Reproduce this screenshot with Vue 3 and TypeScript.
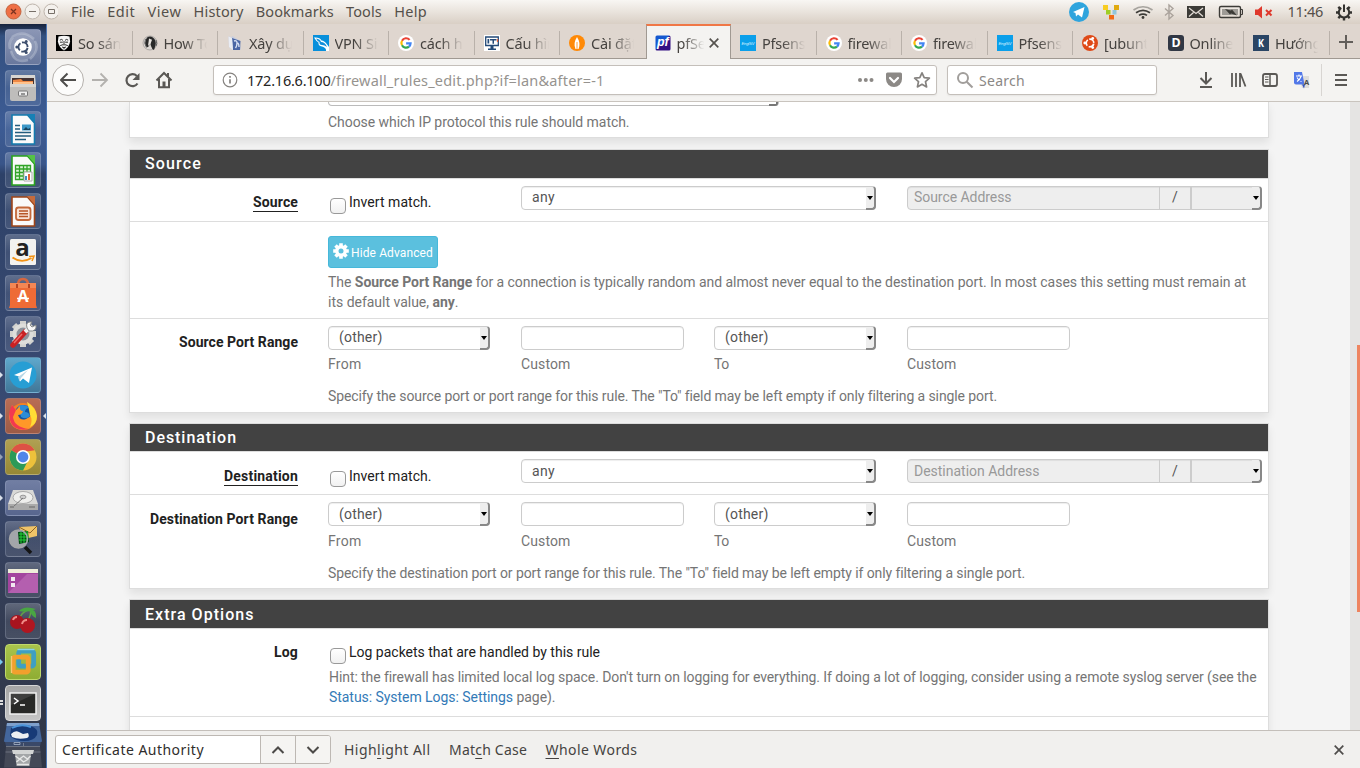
<script setup lang="ts">
interface Tab { title: string; icon: string; active?: boolean }
interface LauncherItem { icon: string; tone: string; mark?: string }
interface PortField { kind: 'select' | 'input'; caption: string; width: number }

// Spreads a label's letters so that it occupies the given width.
const vFit = {
  mounted(el: HTMLElement, binding: { value: number }) {
    const natural = el.getBoundingClientRect().width
    const count = (el.textContent ?? '').length
    if (count > 0) el.style.letterSpacing = `${(binding.value - natural) / count}px`
  },
}

const menus: [string, number][] = [
  ['File', 24], ['Edit', 28], ['View', 34], ['History', 50], ['Bookmarks', 78], ['Tools', 36], ['Help', 33],
]

const google = '<circle cx="8" cy="8" r="8" fill="#fff"/><g fill="none" stroke-width="2.2"><path d="M11.6 4.9A4.6 4.6 0 0 0 4 5.7" stroke="#ea4335"/><path d="M4 5.7a4.6 4.6 0 0 0 0 4.6" stroke="#fbbc05"/><path d="M4 10.3a4.6 4.6 0 0 0 7 1.3" stroke="#34a853"/><path d="M11 11.6a4.6 4.6 0 0 0 1.6-3.3H8.1" stroke="#4285f4"/></g>'
const engBlue = '<path fill="#0a9fea" d="M0 0h16v16H0z"/><text x="8" y="9.6" font-size="4.2" font-style="italic" font-family="Liberation Sans" text-anchor="middle" fill="#d8f0ff" textLength="13">EngISV</text>'

const favicons: Record<string, string> = {
  anon: '<path d="M0 0h16v16H0z"/><path d="M2.500 1.500q5.500-1.500 11 0l.6 5q-.8 5.500-6.100 9Q2.700 12 1.900 6.500z" fill="#f5f5f5"/><path d="M3.800 5.200q1.700-1.700 3.200.2M9 5.400q1.500-1.900 3.200-.2M4 7.200h2.800M9.200 7.200H12M8 6v3.200M4.200 10.600l3-1 .8.7.8-.7 3 1M6 12q2 1.200 4 0M8 12.500v2" stroke="#000" stroke-width=".8" fill="none"/>',
  rhino: '<circle cx="8" cy="8" r="7" fill="#ddd8d4" stroke="#8b8887" stroke-width=".6"/><path d="M5 2.500Q9 0 12 3.500q2.500 3 1.500 7L12 15q-2-.5-3-4L8 7.500 7 11q-1 1.500-2.500 1Q1.500 8 5 2.500z" fill="#292929"/><path d="M7 3.500l3 1.300-1.500 4L6 11z" fill="#e8e4e0"/><path d="M3.500 4q-2 4 1 8.500M14 5q1.500 4 0 6" stroke="#666" fill="none"/>',
  book: '<path d="M1.500 1.500l3 .5 1-1 7 4.500 1.300 9-8.300.5L2 12z" fill="#c9cede"/><path d="M5 3l8.500 3-.5 9H6z" fill="#4a66a4"/><path d="M1.500 1.500L5 3l1 12-4-3z" fill="#e9ecf3"/><path d="M7 6q3-1 3 2 0 3-1.500 5M10 8q2 0 2 4" stroke="#d6dff2" stroke-width="1.400" fill="none"/>',
  vpn: '<path d="M0 0h16v16H0z" fill="#078fdb"/><path d="M1 2.500q6-.5 7.500 3 3 .2 6 4.500L16 12v4h-3q.5-3.500-4-4.500Q5 11 5.500 7.500 3 6 1 2.500z" fill="#fff"/><path d="M3 3.500q4.500.5 5 3.500 4 0 6 5-2.500-2-5-2-3 0-2.500-3Q4.500 6.500 3 3.500z" fill="#118ed9"/>',
  google,
  monitor: '<path d="M0 0h16v16H0z" fill="#fff"/><path d="M1.700 2h12.600v8.500H1.700z" fill="#fff" stroke="#244a78" stroke-width="1.300"/><path d="M6.500 11h3v2.500H12V15H4v-1.500h2.500zM3.500 4h1.700v4.500H3.500zM6 4h6.500v1.500H10v3.200H8.500V5.500H6z" fill="#244a78"/><path d="M13.500 4v3" stroke="#ee6842" stroke-width="1.200"/>',
  leaf: '<circle cx="8" cy="8" r="8" fill="#ff8906"/><path d="M8 2q4 6 1.500 12h-3Q4 8 8 2z" fill="#fff"/><path d="M8 7v7" stroke="#ff8906" stroke-width=".8"/>',
  pf: '<defs><linearGradient id="pfg" x2="1" y2="1"><stop offset=".45" stop-color="#1558cf"/><stop offset=".5" stop-color="#331083"/></linearGradient></defs><rect x=".5" y=".5" width="15" height="15" rx="1.500" fill="url(#pfg)"/><text x="7.800" y="11.400" font-size="12.500" font-weight="bold" font-style="italic" font-family="Liberation Sans" text-anchor="middle" fill="#fff">pf</text>',
  eng: engBlue,
  ubuntu: '<circle cx="8" cy="8" r="8" fill="#df4a18"/><circle cx="8" cy="8" r="3.800" fill="none" stroke="#fff" stroke-width="1.700" stroke-dasharray="6.500 1.460" stroke-dashoffset="-.7"/><g fill="#fff"><circle cx="2.800" cy="8" r="1.400"/><circle cx="10.700" cy="3.400" r="1.400"/><circle cx="10.700" cy="12.600" r="1.400"/></g>',
  dlet: '<rect width="16" height="16" rx="3" fill="#313744"/><text x="8" y="12.300" font-size="12.500" font-weight="bold" font-family="Noto Sans" text-anchor="middle" fill="#fff">D</text>',
  klet: '<path d="M0 0h16v16H0z" fill="#2a4565"/><text x="8" y="11.800" font-size="10.500" font-weight="bold" font-family="Noto Sans" text-anchor="middle" fill="#fff" textLength="6" lengthAdjust="spacingAndGlyphs">K</text>',
}

const tabs: Tab[] = [
  { title: 'So sánh', icon: 'anon' }, { title: 'How To', icon: 'rhino' }, { title: 'Xây dựng', icon: 'book' },
  { title: 'VPN Site', icon: 'vpn' }, { title: 'cách hoạt', icon: 'google' }, { title: 'Cấu hình', icon: 'monitor' },
  { title: 'Cài đặt', icon: 'leaf' }, { title: 'pfSense', icon: 'pf', active: true }, { title: 'Pfsense', icon: 'eng' },
  { title: 'firewall', icon: 'google' }, { title: 'firewall', icon: 'google' }, { title: 'Pfsense', icon: 'eng' },
  { title: '[ubuntu]', icon: 'ubuntu' }, { title: 'Online', icon: 'dlet' }, { title: 'Hướng', icon: 'klet' },
]

const doc = (edge: string, fold: string, body: string) =>
  `<path d="M7 4h15.500l7 8v21H7z" fill="#fafafa" stroke="${edge}" stroke-width="1.600"/><path d="M22 3h8v9z" fill="${fold}"/>${body}`

const apps: Record<string, string> = {
  dash: '<circle cx="18" cy="18" r="13" fill="#fff" opacity=".13"/><path d="M7 8Q18 0 29 10M30 12q5 9-5 18M23 31Q9 35 6 22M5 20Q3 13 8 8" stroke="#d5dbe6" stroke-width="2.500" opacity=".35" fill="none"/><circle cx="18" cy="18" r="8.800" fill="#fff"/><circle cx="18" cy="18" r="4.600" fill="none" stroke="#3d4e6d" stroke-width="1.900" stroke-dasharray="8 1.630" stroke-dashoffset="-.8"/><g fill="#3d4e6d"><circle cx="11.800" cy="18" r="1.500"/><circle cx="21.200" cy="12.600" r="1.500"/><circle cx="21.200" cy="23.400" r="1.500"/></g>',
  files: '<path d="M6 5h24l1 11H5z" fill="#d8d6d2"/><path d="M7 8h22v7H7z" fill="#433"/><path d="M8 10l8-1 2 2h10v5H8z" fill="#ee8845"/><path d="M8 12h20v2H8z" fill="#ffc28c"/><path d="M5 14h26v15q0 2-2 2H7q-2 0-2-2z" fill="#bebdbb"/><path d="M5 14h26v3H5z" fill="#d5d4d2"/><rect x="13.500" y="21" width="9" height="5" rx="1" fill="#eee" stroke="#777"/><path d="M16 24h4" stroke="#777" stroke-width="1.500"/>',
  writer: doc('#147bad', '#1780b5', '<path d="M10 14.500h5M10 18h5M10 21.500h16M10 25h16M10 28.500h11" stroke="#235d7e" stroke-width="1.600"/><path d="M17 13.500h9v6h-9z" fill="#3d98c8"/><path d="M18 19l3-3 2 2 2-1v2z" fill="#17435e"/>'),
  calc: doc('#29a21f', '#55c345', '<path d="M10.500 13.500h15v14h-15zM10.500 17h15M10.500 20.500h15M10.500 24h15M14.500 13.500v14M18.500 13.500v14M22 13.500v14" stroke="#31a428" stroke-width="1.300" fill="#dcf5d7"/><path d="M19 20h8v9h-8z" fill="#fff" stroke="#aaa"/><path d="M21 28v-4" stroke="#3f8fbf" stroke-width="2"/><path d="M24 28v-6" stroke="#e16536" stroke-width="2"/>'),
  impress: doc('#a04519', '#c66b3c', '<rect x="11" y="14.500" width="14.500" height="12.500" rx="2.500" fill="#f8e3d7" stroke="#c4683a" stroke-width="1.800"/><path d="M14 18h9M14 20.800h9M14 23.600h9" stroke="#b75627" stroke-width="1.500"/>'),
  amazon: '<rect x="5" y="5" width="26" height="26" rx="1.500" fill="#f3f2f0"/><text x="17.500" y="21.500" font-family="Open Sans" font-size="24" font-weight="bold" text-anchor="middle" fill="#222">a</text><path d="M7.500 23.500q9 6.500 19 .5" stroke="#f39215" stroke-width="1.900" fill="none"/><path d="M24 22.500l5-.5-2 5" stroke="#f39215" stroke-width="1.500" fill="none"/>',
  store: '<path d="M13 10q0-6 5-6t5 6" stroke="#d76740" stroke-width="2.500" fill="none"/><path d="M5 8h26v22l1 3H4l1-3z" fill="#ee6b36"/><path d="M5 8h26v5H5z" fill="#f48754"/><path d="M12 13V9M24 13V9" stroke="#b84623" stroke-width="2"/><text x="18" y="27" text-anchor="middle" font-family="Open Sans" font-weight="bold" font-size="16" fill="#fff">A</text><path d="M12 23.500h12" stroke="#fff" stroke-width="1.500"/>',
  settings: '<g stroke="#d2d2cf" stroke-width="6"><path d="M18 5v26M5 18h26M9 9l18 18M9 27L27 9"/></g><circle cx="18" cy="18" r="10.500" fill="#dededb"/><circle cx="18" cy="18" r="6.500" fill="#8d929b"/><path d="M8 29L20 16" stroke="#c82123" stroke-width="5.500" stroke-linecap="round"/><path d="M9 27l8-9" stroke="#ee6b68" stroke-width="1.500"/><path d="M20 16l5-5" stroke="#eee" stroke-width="4"/><path d="M22 12q-2-7 5-6l-2 3 2 2 4-2q1 7-7 6z" fill="#f7f7f7" stroke="#858888"/>',
  telegram: '<circle cx="18" cy="18" r="13.500" fill="#279ed4"/><path d="M9 18l18-7.500L24 26l-6-4.500-3 3-1-5z" fill="#fff"/><path d="M13 20l10-7-7 8-1.500 3.500z" fill="#b8d7e7"/>',
  firefox: '<circle cx="18" cy="18" r="13" fill="#f38122"/><circle cx="18.500" cy="16" r="9" fill="#16539f"/><path d="M13 8q7-3 12 2-5 0-5 4 4 0 5 4-4 4-9 1z" fill="#2d8cd6"/><path d="M22 4q10 5 10 15-2 13-15 13Q5 31 4 18l3-11 4 5 4-4q-1 5 3 5-1 4-5 4 2 6 8 4 8-3 5-11-2-2-4-6z" fill="#ff9828"/><path d="M22 4q9 6 10 14 0 8-7 11 3-7 0-12-1-7-3-13z" fill="#ffdc35"/><path d="M7 7q-5 9-1 18 5 9 18 6Q9 29 8 19l3-7z" fill="#f33950"/>',
  chrome: '<circle cx="18" cy="18" r="13.500" fill="#edc13b"/><path d="M18 18L6.300 11.300A13.500 13.500 0 0 1 29.700 11.300L18 13z" fill="#dd5245"/><path d="M18 18L6.300 11.300A13.500 13.500 0 0 0 18 31.500l5-10z" fill="#2c9a58"/><circle cx="18" cy="18" r="7" fill="#fff"/><circle cx="18" cy="18" r="5.400" fill="#5085e9"/>',
  disk: '<path d="M8 10h20l5 14v6H3v-6z" fill="#d8d8d6"/><path d="M3 24h30v6H3z" fill="#aaa"/><ellipse cx="18" cy="17.500" rx="10" ry="6" fill="#efefed" stroke="#aaa"/><ellipse cx="18" cy="17" rx="3" ry="1.800" fill="#ccc" stroke="#999"/><path d="M9 26l9-8" stroke="#777"/><path d="M5 27h4M24 27h6" stroke="#666"/>',
  zenmap: '<path d="M14 6l18-1v10l-13 3z" fill="#f0c468"/><path d="M14 6l11 6 7-7" fill="none" stroke="#8c6225"/><path d="M20 26l6 6" stroke="#151515" stroke-width="3.500"/><circle cx="13.500" cy="18" r="9" fill="#a3a6aa"/><path d="M13 11l10-1 1 11-10 2z" fill="#034a12"/><path d="M14 13h9M14 16h10M14 19h9M16 11v11M19 10v12M22 10v11" stroke="#28d93c" stroke-width=".9"/><circle cx="13.500" cy="18" r="9" fill="none" stroke="#a5a7a8" stroke-width="1.500"/>',
  desktop: '<path d="M3 7h30v24H3z" fill="#a3459f"/><path d="M3 7h30v4H3z" fill="#eeedda"/><path d="M3 31L22 12h11v19z" fill="#c57abf" opacity=".5"/><path d="M6 15h4v4H6zM6 21h4v4H6z" fill="#f1e7ef"/>',
  cherry: '<path d="M14 17Q16 9 25 6M22 18q5-6 3-12" stroke="#64a146" stroke-width="1.400" fill="none"/><path d="M14 8q5-6 17-2-8 4-17 2zM24 6q8 0 7 9-5-2-7-9z" fill="#49a643"/><circle cx="12" cy="19" r="7" fill="#a8141f"/><circle cx="22.500" cy="22.500" r="7.500" fill="#b01620"/><path d="M8 17q1-3 4-3M17 21q1-4 5-4" stroke="#ef8d87" stroke-width="2" fill="none"/>',
  vmware: '<rect x="13.700" y="7.200" width="15" height="15" rx="2" fill="none" stroke="#3f9fc2" stroke-width="4.800"/><path d="M12.500 5.500h17" stroke="#8ed3e6" stroke-width="1.400"/><rect x="8.200" y="13.200" width="15" height="15" rx="2" fill="none" stroke="#f2a02d" stroke-width="4.800"/><path d="M6.500 12v17" stroke="#f8c873" stroke-width="1.300"/><path d="M13.700 15.600v6.600h7" fill="none" stroke="#3f9fc2" stroke-width="2.600"/>',
  terminal: '<rect x="5" y="8" width="26" height="21" fill="#282927" stroke="#f2f2f2" stroke-width="1.500"/><path d="M6 9h24L6 20z" fill="#555" opacity=".5"/><path d="M9 13l4 3-4 3M15 20h5" fill="none" stroke="#fff" stroke-width="1.500"/>',
}

const launcher: LauncherItem[] = [
  { icon: 'dash', tone: 'light' }, { icon: 'files', tone: 'plain' }, { icon: 'writer', tone: 'plain' },
  { icon: 'calc', tone: 'plain' }, { icon: 'impress', tone: 'plain' }, { icon: 'amazon', tone: 'plain' },
  { icon: 'store', tone: 'plain' }, { icon: 'settings', tone: 'plain' }, { icon: 'telegram', tone: 'cyan', mark: 'run' },
  { icon: 'firefox', tone: 'rust', mark: 'focus' }, { icon: 'chrome', tone: 'olive', mark: 'hollow' },
  { icon: 'disk', tone: 'steel', mark: 'run' }, { icon: 'zenmap', tone: 'plain' }, { icon: 'desktop', tone: 'plain' },
  { icon: 'cherry', tone: 'plain' }, { icon: 'vmware', tone: 'lime', mark: 'sky' }, { icon: 'terminal', tone: 'grey', mark: 'dots' },
]

const portFields: PortField[] = [
  { kind: 'select', caption: 'From', width: 33.5 }, { kind: 'input', caption: 'Custom', width: 49.5 },
  { kind: 'select', caption: 'To', width: 15 }, { kind: 'input', caption: 'Custom', width: 49.5 },
]
</script>

<template>
  <div class="desktop">
    <header class="menubar">
      <svg class="winbtns" width="58" height="24" viewBox="0 0 58 24">
        <circle cx="13.500" cy="11.500" r="7.500" fill="#ef6f45" stroke="#c4643f" />
        <path d="M11 9l5 5M16 9l-5 5" stroke="#7b3320" stroke-width="1.300" />
        <g fill="#f4f1ed" stroke="#bdb4ab"><circle cx="32.500" cy="11.500" r="7.500" /><circle cx="51.500" cy="11.500" r="7.500" /></g>
        <path d="M29 11.500h7M48.500 9.500h6v4h-6z" fill="none" stroke="#777069" />
      </svg>
      <nav class="menus"><span v-for="[name, w] in menus" :key="name" v-fit="w">{{ name }}</span></nav>
      <svg class="tray" width="300" height="24" viewBox="1060 0 300 24">
        <circle cx="1079" cy="12" r="10" fill="#2fa4dd" /><path d="M1073 12l11.500-5-2.500 10.500-4-3-2 2-.5-3.500z" fill="#fff" />
        <path d="M1103 5h5v5h-5z" fill="#f8cd21" /><path d="M1114 5h5v5h-5z" fill="#e0aa0f" /><path d="M1106 10h4.500v4.500h-4.500z" fill="#a0ce25" /><path d="M1112.500 10h4v4.500h-4z" fill="#91c7dc" /><path d="M1109 15h5v4.500h-5z" fill="#f26a16" />
        <g fill="none" stroke="#3c3b37" stroke-width="1.700"><path d="M1133.500 10q9.500-6.500 19 0" opacity=".4" /><path d="M1136 12.800q7-5 14 0M1139 15.400q4-2.600 8 0" /></g><circle cx="1143" cy="17.500" r="1.400" fill="#3c3b37" />
        <path d="M1165 8.500l8 7-4 3.500V5l4 3.500-8 7" fill="none" stroke="#aaa39c" stroke-width="1.400" />
        <path d="M1187 6h18v12h-18z" fill="#3c3b37" /><path d="M1189 8l7 5.500 7-5.500M1189 16.500l4.500-4M1203 16.500l-4.500-4" fill="none" stroke="#e6e0da" stroke-width="1.200" />
        <rect x="1219.500" y="6.500" width="21" height="11" rx="1.500" fill="none" stroke="#3c3b37" stroke-width="1.400" /><path d="M1222 9h16v6h-16z" fill="#9e9b96" /><path d="M1241 9.500h1.500v5h-1.500" fill="none" stroke="#3c3b37" /><path d="M1225 9l6 1.500 1-1 5 6-6-2-1 1z" fill="#3c3b37" />
        <path d="M1255 9.500h3l4-3.500v12.500l-4-3.500h-3z" fill="#df382c" /><path d="M1266 10l5.500 5.500M1271.500 10l-5.500 5.500" stroke="#df382c" stroke-width="2" />
        <g stroke="#33322f" fill="none"><path d="M1341.300 7.900a5.200 5.200 0 1 0 5.400 0" stroke-width="2" /><path d="M1344 4.500v7.500" stroke-width="2" /><path d="M1336 12.500h3M1349 12.500h3M1338.300 18.200l2-2M1349.700 18.200l-2-2M1344 17v3.500M1338.300 6.800l2 2M1349.700 6.800l-2 2" stroke-width="2.400" /></g>
      </svg>
      <span class="clock" v-fit="35.5">11:46</span>
    </header>

    <div class="main">
      <aside class="launcher">
        <div v-for="item in launcher" :key="item.icon" class="slot">
          <i v-if="item.mark" class="mark" :class="item.mark"></i>
          <i v-if="item.mark === 'focus'" class="mark-right"></i>
          <div class="tile" :class="item.tone"><svg width="36" height="36" viewBox="0 0 36 36" v-html="apps[item.icon]" /></div>
        </div>
        <svg class="folded" width="40" height="46" viewBox="0 0 40 46">
          <path d="M4 1h32l3 18q0 1-1 1H2q-1 0-1-1z" fill="#43669c" /><path d="M4 1h32l.5 3H3.500z" fill="#7fa0cc" />
          <path d="M8 6q9-5 20-2 8 3 6 9-3 6-13 6-9 0-14-5z" fill="#173a77" /><path d="M9 6q9-5 19-1" stroke="#4c94da" stroke-width="2" fill="none" /><path d="M8 12q4-4 8-2l4 2 5-1q2 4-1 5-9 2-15-1z" fill="#eceff2" />
          <path d="M2 20h36l-1 4H3z" fill="#3a4968" /><path d="M11 20.500h6v2h-6z" fill="none" stroke="#a8b6cc" stroke-width=".8" /><path d="M20.500 21v8" stroke="#7d8798" stroke-width=".8" />
          <path d="M3 24.500h34l2 21H1z" fill="#444957" /><path d="M3 24.500h34M2.500 30h35" stroke="#6c7280" />
          <path d="M9 28h22l-1 4H10z" fill="#d2d4d4" /><path d="M12 32h16l-1.500 12h-13z" fill="#a3a6a8" /><path d="M12.500 34l4 3 4-3 4 3 3-3M13.500 40l3.500-3 3.500 3 5-3M14 42.500h12" stroke="#e6e7e7" stroke-width="1.400" fill="none" />
        </svg>
      </aside>

      <section class="browser">
        <div class="tabbar">
          <div v-for="(tab, i) in tabs" :key="i" class="tab" :class="{ active: tab.active, before: tabs[i + 1]?.active }">
            <svg class="fav" width="16" height="16" viewBox="0 0 16 16" v-html="favicons[tab.icon]" />
            <span class="title">{{ tab.title }}</span>
            <svg v-if="tab.active" class="tabclose" width="10" height="10" viewBox="0 0 10 10"><path d="M.7.7l8.600 8.600M9.300.7L.7 9.300" stroke="#56534f" stroke-width="1.700" /></svg>
          </div>
          <svg class="plus" width="32" height="34" viewBox="0 0 32 34"><path d="M16 11v14M9 18h14" stroke="#625e5a" stroke-width="2" /></svg>
        </div>

        <div class="navbar">
          <svg class="navicons" width="166" height="42" viewBox="47 59 166 42">
            <circle cx="68" cy="80" r="15.500" fill="#fcfcfb" stroke="#b5b1ad" />
            <path d="M76 80H61.500M67.500 73.500L61 80l6.500 6.500" fill="none" stroke="#4f4e4c" stroke-width="2" stroke-linejoin="round" />
            <path d="M92 80h14.500M100.500 73.500L107 80l-6.500 6.500" fill="none" stroke="#b3b1ae" stroke-width="1.800" />
            <path d="M137.500 83.500a6 6 0 1 1-.7-7.500" fill="none" stroke="#5a5855" stroke-width="2.200" /><path d="M139.500 73v7h-7z" fill="#5a5855" />
            <path d="M156.500 80.500l7.500-7.500 7.500 7.500M159 79v8.300h10V79M168 73v4" fill="none" stroke="#5a5855" stroke-width="2" /><path d="M162.500 81.500h3v5.500h-3z" fill="#5a5855" />
          </svg>
          <div class="urlbar">
            <svg width="16" height="16" viewBox="0 0 16 16"><circle cx="8" cy="8" r="6.800" fill="none" stroke="#85827f" stroke-width="1.200" /><path d="M8 7.200v4.300M8 4v1.700" stroke="#85827f" stroke-width="1.700" /></svg>
            <span class="url"><b v-fit="83.5">172.16.6.100</b><span v-fit="274">/firewall_rules_edit.php?if=lan&amp;after=-1</span></span>
            <svg class="urltools" width="78" height="18" viewBox="856 71 78 18">
              <g fill="#8c8986"><circle cx="860" cy="80" r="2" /><circle cx="865.800" cy="80" r="2" /><circle cx="871.500" cy="80" r="2" /><path d="M886 74q0-1.500 1.500-1.500h13q1.500 0 1.500 1.500v5a8 8 0 0 1-16 0z" /></g>
              <path d="M890 78l4 4 4-4" fill="none" stroke="#fff" stroke-width="2.200" stroke-linecap="round" />
              <path d="M922 72.800l2.200 4.800 5.200.6-3.900 3.500 1.100 5.200-4.600-2.600-4.600 2.600 1.100-5.200-3.900-3.500 5.200-.6z" fill="none" stroke="#85827f" stroke-width="1.700" stroke-linejoin="round" />
            </svg>
          </div>
          <div class="search">
            <svg width="18" height="18" viewBox="0 0 18 18"><circle cx="7" cy="7" r="5" fill="none" stroke="#a19e9b" stroke-width="2" /><path d="M10.700 10.700l5.800 5.800" stroke="#a19e9b" stroke-width="2" /></svg>
            <span v-fit="46">Search</span>
          </div>
          <svg class="tools" width="203" height="42" viewBox="1157 59 203 42">
            <g fill="none" stroke="#5a5855" stroke-width="2"><path d="M1206 72v11M1200.500 78l5.500 5.500 5.500-5.500M1200 87h12" /><path d="M1232 73v14M1236 73v14M1240 73v14M1240.500 73.500l5 13" stroke-width="1.800" /><rect x="1263" y="74" width="14" height="12" rx="2" stroke-width="1.800" /><path d="M1270 74v12" stroke-width="1.500" /><path d="M1265 77h3.500M1265 79.500h3.500M1265 82h3.500" stroke-width="1" /><path d="M1335 75h12M1335 80h12M1335 85h12" /></g>
            <path d="M1299 76h10v12h-7z" fill="#deddda" /><path d="M1294 72h8l2.500 12.500H1296q-2 0-2-2z" fill="#5278e8" /><path d="M1302 84.500h3l-1 4z" fill="#3455bd" /><path d="M1296 76h6M1299 74.500V76M1297 81.500q3-2 4-5M1297 77.500q1.500 3 4.500 4" fill="none" stroke="#fff" stroke-width="1.100" /><text x="1306.500" y="84.500" font-size="7.500" font-weight="bold" font-family="Noto Sans" text-anchor="middle" fill="#4b4b4b">A</text>
            <path d="M1321.500 64v32" stroke="#d8d5d2" />
          </svg>
        </div>

        <div class="page">
          <div class="panels">
            <div class="panel first">
              <div class="cut"><i class="cutarrow"></i></div>
              <p class="help"><span v-fit="301.500">Choose which IP protocol this rule should match.</span></p>
            </div>

            <div class="panel source">
              <h2><span v-fit="57">Source</span></h2>
              <div class="row match">
                <label class="lab under"><span v-fit="45">Source</span></label>
                <div class="check"><i class="box"></i><span v-fit="82.5">Invert match.</span></div>
                <div class="select wide"><span v-fit="23">any</span><i class="arrow"></i></div>
                <div class="addr"><div class="addrin"><span v-fit="97.5">Source Address</span></div><div class="slash">/</div><div class="mask"><i class="arrow"></i></div></div>
              </div>
              <div class="row adv">
                <div class="advbody">
                  <button class="hide"><svg width="16" height="16" viewBox="0 0 16 16"><g stroke="#fff" stroke-width="3.600"><path d="M8 .2v15.600M.2 8h15.600M2.500 2.500l11 11M2.500 13.500l11-11" /></g><circle cx="8" cy="8" r="5.900" fill="#fff" /><circle cx="8" cy="8" r="2.500" fill="#5bc0de" /></svg><span v-fit="82">Hide Advanced</span></button>
                  <p class="help"><span v-fit="918">The <b>Source Port Range</b> for a connection is typically random and almost never equal to the destination port. In most cases this setting must remain at</span></p>
                  <p class="help"><span v-fit="130.5">its default value, <b>any</b>.</span></p>
                </div>
              </div>
              <div class="row ports">
                <label class="lab"><span v-fit="119">Source Port Range</span></label>
                <div v-for="(f, i) in portFields" :key="i" class="field">
                  <div class="select" :class="{ text: f.kind === 'input' }"><template v-if="f.kind === 'select'"><span v-fit="43.500">(other)</span><i class="arrow"></i></template></div>
                  <p class="help"><span v-fit="f.width">{{ f.caption }}</span></p>
                </div>
                <p class="help note"><span v-fit="668">Specify the source port or port range for this rule. The "To" field may be left empty if only filtering a single port.</span></p>
              </div>
            </div>

            <div class="panel dest">
              <h2><span v-fit="92">Destination</span></h2>
              <div class="row match low">
                <label class="lab under"><span v-fit="74">Destination</span></label>
                <div class="check"><i class="box"></i><span v-fit="82.5">Invert match.</span></div>
                <div class="select wide"><span v-fit="23">any</span><i class="arrow"></i></div>
                <div class="addr"><div class="addrin"><span v-fit="125.5">Destination Address</span></div><div class="slash">/</div><div class="mask"><i class="arrow"></i></div></div>
              </div>
              <div class="row ports low">
                <label class="lab"><span v-fit="148">Destination Port Range</span></label>
                <div v-for="(f, i) in portFields" :key="i" class="field">
                  <div class="select" :class="{ text: f.kind === 'input' }"><template v-if="f.kind === 'select'"><span v-fit="43.500">(other)</span><i class="arrow"></i></template></div>
                  <p class="help"><span v-fit="f.width">{{ f.caption }}</span></p>
                </div>
                <p class="help note"><span v-fit="696">Specify the destination port or port range for this rule. The "To" field may be left empty if only filtering a single port.</span></p>
              </div>
            </div>

            <div class="panel extra">
              <h2><span v-fit="109.500">Extra Options</span></h2>
              <div class="row log">
                <label class="lab"><span v-fit="24">Log</span></label>
                <div class="logbody">
                  <div class="check"><i class="box"></i><span v-fit="251">Log packets that are handled by this rule</span></div>
                  <p class="help hint"><span v-fit="927">Hint: the firewall has limited local log space. Don't turn on logging for everything. If doing a lot of logging, consider using a remote syslog server (see the</span></p>
                  <p class="help hint"><span v-fit="226.500"><a>Status: System Logs: Settings</a> page).</span></p>
                </div>
              </div>
            </div>
          </div>
          <div class="scroll"><i class="thumb"></i></div>
        </div>

        <footer class="findbar">
          <div class="findbox">
            <div class="findin"><span v-fit="142">Certificate Authority</span></div>
            <div class="findbtn"><svg width="14" height="8" viewBox="0 0 14 8"><path d="M1.500 7L7 1.500 12.500 7" fill="none" stroke="#4c4a48" stroke-width="2" /></svg></div>
            <div class="findbtn"><svg width="14" height="8" viewBox="0 0 14 8"><path d="M1.500 1L7 6.500 12.500 1" fill="none" stroke="#4c4a48" stroke-width="2" /></svg></div>
          </div>
          <span class="opt" v-fit="86.500">High<u>l</u>ight All</span>
          <span class="opt" v-fit="78">Mat<u>c</u>h Case</span>
          <span class="opt" v-fit="92"><u>W</u>hole Words</span>
          <svg class="findclose" width="10" height="10" viewBox="0 0 10 10"><path d="M.7.7l8.600 8.600M9.300.7L.7 9.300" stroke="#4f4d4b" stroke-width="1.700" /></svg>
        </footer>
      </section>
    </div>
  </div>
</template>

<style>
body { overflow: hidden; }
</style>

<style scoped>
.desktop { width: 1360px; height: 768px; display: flex; flex-direction: column; overflow: hidden; font-family: "Noto Sans", "Open Sans", sans-serif; font-size: 14px; color: #4a4845; }
.desktop * { box-sizing: border-box; }
svg { display: block; flex: none; }
p, h2 { margin: 0; }
span { white-space: nowrap; }

.menubar { height: 24px; flex: none; display: flex; align-items: center; background: linear-gradient(#f8f6f3, #e9e3dc 50%, #d9cfc5); position: relative; font-size: 14.500px; color: #55504a; }
.winbtns { margin-right: 13px; }
.menus { display: flex; gap: 12.200px; flex: 1; position: relative; top: -1px; }
.clock { position: absolute; left: 1287.500px; top: 1px; }

.main { flex: 1; display: flex; min-height: 0; }
.launcher { width: 47px; flex: none; padding-top: 5px; border-right: 1px solid #4c76b4; background: linear-gradient(#17233c, #33507f 12px, #3d5c95 100px, #395589 140px, #2d4168 150px, #36486f 300px, #3a4b74 440px, #343e57 560px, #2f3545 744px); overflow: hidden; }
.slot { height: 41px; padding-left: 5px; position: relative; }
.tile { width: 36px; height: 36px; border-radius: 4px; border: 1px solid rgba(210, 220, 240, .2); background: linear-gradient(rgba(255, 255, 255, .22), rgba(255, 255, 255, .07) 50%, rgba(255, 255, 255, .1)); }
.tile svg { margin: -1px; }
.tile.light { background: linear-gradient(#8b96b5, #69789d); }
.tile.cyan { background: linear-gradient(#5fa8cc, #417798); }
.tile.rust { background: linear-gradient(#b96d54, #9c5b46); }
.tile.olive { background: linear-gradient(#b0a052, #968836); }
.tile.steel { background: linear-gradient(#717ea3, #58668e); }
.tile.lime { background: linear-gradient(#a9c44c, #8fad33); border-color: #bfd86c; }
.tile.grey { background: linear-gradient(#a5a5a5, #c4c4c4); border-color: #d6d6d6; }
.mark, .mark-right { position: absolute; top: 15px; left: 0; border: 3px solid transparent; border-left-color: #dbe1ea; border-right-width: 0; }
.mark.hollow { border-left-color: #96a0b4; }
.mark.sky { border-left-color: #78c7ee; }
.mark.dots { border: 0; width: 3px; height: 5px; border-top: 2px solid #ddd; border-bottom: 2px solid #ddd; }
.mark-right { left: auto; right: 0; border-left-width: 0; border-right: 3px solid #dbe1ea; }
.folded { margin: -4px 0 0 3px; }

.browser { flex: 1; min-width: 0; display: flex; flex-direction: column; }
.tabbar { height: 35px; flex: none; display: flex; background: #dfd6cf; border-bottom: 1px solid #a09992; }
.tab { width: 85.500px; flex: none; height: 34px; padding: 4px 0 0 9px; display: flex; align-items: center; position: relative; }
.tab::after { content: ""; position: absolute; right: 0; top: 7px; height: 24px; width: 1px; background: #b9b1aa; }
.tab.before::after, .tab.active::after { display: none; }
.title { margin: -1px 0 0 6px; width: 44px; overflow: hidden; line-height: 24px; font-size: 14.500px; letter-spacing: -.2px; color: #45423f; -webkit-mask-image: linear-gradient(90deg, #000 45%, transparent 98%); mask-image: linear-gradient(90deg, #000 45%, transparent 98%); }
.tab.active { height: 35px; background: #f4f3f1; border: 1px solid #a09992; border-top: 2px solid #f07746; border-bottom: 0; padding: 1px 0 0 8px; }
.tab.active .title { width: 28px; -webkit-mask-image: linear-gradient(90deg, #000 20%, transparent 98%); mask-image: linear-gradient(90deg, #000 20%, transparent 98%); }
.tabclose { margin-left: 4px; }

.navbar { height: 43px; flex: none; display: flex; background: #f4f3f1; border-bottom: 1px solid #c9c4be; }
.urlbar, .search { height: 30px; margin-top: 6px; background: #fff; border: 1px solid #c4bfba; border-radius: 3px; display: flex; align-items: center; box-shadow: 0 1px 2px rgba(0, 0, 0, .06); }
.urlbar { width: 724px; padding-left: 8px; }
.url { margin-left: 9px; width: 610px; display: flex; font-size: 14.500px; color: #96938f; }
.url b { font-weight: 400; color: #262523; }
.urltools { margin-left: -1px; }
.search { width: 210px; margin-left: 10px; padding-left: 8px; color: #8b8885; }
.search span { margin-left: 5px; }

.page { height: 628px; flex: none; display: flex; background: #f4f4f4; overflow: hidden; font-family: Roboto, sans-serif; line-height: 20px; }
.panels { width: 1140px; margin-left: 82px; flex: none; }
.panel { background: #fff; border: 1px solid #ddd; box-shadow: 0 5px 8px rgba(0, 0, 0, .08); margin-bottom: 10px; }
.first { height: 36px; border-top: 0; margin-bottom: 11px; padding-left: 198px; }
.cut { width: 451px; height: 4px; border: 1px solid #bbb; border-top: 0; border-radius: 0 0 4px 4px; display: flex; justify-content: flex-end; }
.cutarrow { width: 9px; height: 4px; border-right: 2px solid #777; border-bottom: 2px solid #777; border-radius: 0 0 3px; }
.first .help { padding-top: 6px; }
.source { height: 264px; }
.dest { height: 166px; }
.extra { height: 160px; }
h2 { height: 29px; background: #424242; border-bottom: 1px solid #ddd; color: #fff; font-size: 16px; font-weight: 500; line-height: 27px; padding-left: 15px; }
.dest h2 { height: 28px; }
.extra h2 { line-height: 29px; }
.row { display: grid; grid-template-columns: 168px 163px 163px 163px 1fr; column-gap: 30px; align-items: start; border-bottom: 1px solid #ddd; padding-right: 6px; color: #212121; }
.match { height: 43px; }
.lab { text-align: right; font-weight: 700; padding-top: 13px; }
.under span { display: inline-block; line-height: 18px; border-bottom: 1px solid #212121; }
.check { display: flex; padding-top: 13px; }
.box { width: 16px; height: 16px; border: 1px solid #999; border-radius: 4px; margin: 6px 3px 0 2px; background: linear-gradient(#fff, #f1f1f1); flex: none; }
.select { height: 24px; margin-top: 7px; border: 1px solid #ccc; border-radius: 4px; background: #fff; display: flex; justify-content: space-between; padding-left: 10px; line-height: 21px; color: #555; box-shadow: inset 0 1px 1px rgba(0, 0, 0, .07); }
.wide { grid-column: 3 / span 2; margin-right: 1px; }
.arrow { width: 10px; height: 24px; margin: -1px -1px 0 0; border-right: 2px solid #888; border-bottom: 2px solid #888; border-top: 1px solid #ccc; border-radius: 0 4px 4px 0; background: #eee; display: flex; justify-content: center; align-items: center; flex: none; }
.arrow::before { content: ""; border: 3px solid transparent; border-top: 4px solid #000; border-bottom: 0; }
.addr { height: 24px; margin-top: 7px; display: flex; border: 1px solid #ccc; border-radius: 4px; background: #eee; line-height: 21px; box-shadow: inset 0 1px 1px rgba(0, 0, 0, .07); }
.addrin { width: 251px; padding-left: 6px; color: #999; }
.slash { width: 33px; border: 1px solid #ccc; border-width: 0 2px 0 1px; text-align: center; color: #555; }
.mask { flex: 1; display: flex; justify-content: flex-end; }
.adv { height: 97px; }
.advbody { grid-column: 2 / -1; }
.hide { margin: 14px 0 4px; width: 110px; height: 32px; background: #5bc0de; border: 1px solid #46b8da; border-radius: 3px; color: #fff; font: 12px Roboto, sans-serif; padding: 0 0 0 4px; display: flex; align-items: center; }
.hide svg { margin-top: -3px; }
.hide span { margin: 2px 0 0 2px; }
.help { color: #757575; white-space: nowrap; }
.ports { height: 93px; border: 0; grid-template-rows: 67px 20px; }
.field .help { padding-top: 4px; }
.field .select { margin-right: 1px; }
.field .select.text { margin-right: 0; }
.field:nth-child(5) .select { width: 163px; }
.note { grid-column: 2 / -1; }
.low .select, .low .addr { line-height: 23px; }
.match.low .under span { position: relative; top: 1px; }
.match.low .check span { position: relative; top: 1px; }
.ports.low { grid-template-rows: 68px 20px; }
.ports.low .lab { padding-top: 14px; }
.ports.low .field .help { padding-top: 5px; }
.log { height: 88px; }
.logbody { grid-column: 2 / -1; }
.logbody .check { height: 38px; }
.hint { padding-left: 1px; }
a { color: #337ab7; }
.scroll { width: 10px; margin-left: auto; background: #e5e4e3; padding: 243px 0 0 7px; }
.thumb { display: block; width: 3px; height: 267px; background: #ee8460; }

.findbar { height: 38px; flex: none; display: flex; align-items: center; background: #f1f0ee; border-top: 1px solid #c4bfba; padding-left: 8px; color: #454341; font-size: 14px; }
.findbox { display: flex; width: 276px; height: 29px; border: 1px solid #bdb8b3; border-radius: 3px; background: #fff; margin-right: 13px; color: #2f2e2c; overflow: hidden; }
.findin { width: 205px; padding-left: 6px; line-height: 27px; }
.findbtn { width: 35px; border-left: 1px solid #bdb8b3; background: #f5f4f2; display: flex; align-items: center; justify-content: center; }
.opt { margin-right: 18.500px; }
u { text-underline-offset: 3px; }
.findclose { margin-left: auto; margin-right: 16px; }
</style>
